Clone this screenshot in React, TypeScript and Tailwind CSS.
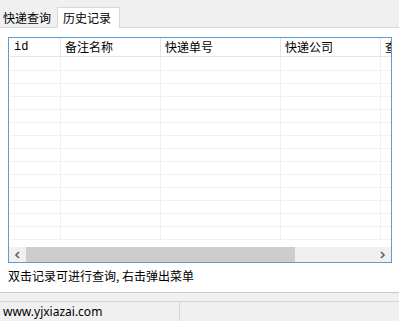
const cols = [
  { label: 'id', w: 'w-[51px]', mono: true },
  { label: '备注名称', w: 'w-[100px]' },
  { label: '快递单号', w: 'w-[120px]' },
  { label: '快递公司', w: 'w-[100px]' },
  { label: '查询时间', w: 'w-[100px]' },
];

const rows = Array.from({ length: 14 });

export default function App() {
  return (
    <div className="w-[399px] h-[321px] bg-white flex flex-col overflow-hidden text-[12px] text-black font-['Noto_Sans_CJK_SC',sans-serif]">
      {/* Tabs */}
      <div className="h-[28px] bg-[#f0f0f0] border-b border-[#d9d9d9] flex items-end shrink-0">
        <div className="h-[19px] w-[57px] pl-[3px] flex items-center leading-none">快递查询</div>
        <div className="h-[21px] w-[63px] -mb-px bg-white border border-b-0 border-[#d9d9d9] flex items-center pl-[5px] leading-none">
          历史记录
        </div>
      </div>

      {/* Body */}
      <div className="flex-1 flex flex-col pl-[8px] pt-[9px]">
        <div className="w-[384px] h-[226px] border border-[#5a9bd8] flex flex-col overflow-hidden">
          <div className="flex-1 overflow-hidden pl-px">
            <div className="flex h-[19px] border-b border-[#e5e5e5] w-[500px]">
              {cols.map((c) => (
                <div
                  key={c.label}
                  className={`${c.w} shrink-0 border-r border-[#e5e5e5] flex items-center pl-[4px] leading-none ${c.mono ? "font-['Liberation_Mono',monospace] text-[12px]" : ''}`}
                >
                  {c.label}
                </div>
              ))}
            </div>
            {rows.map((_, i) => (
              <div key={i} className={`flex w-[500px] border-b border-[#f0f0f0] ${i === 0 ? 'h-[14px]' : 'h-[13px]'}`}>
                {cols.map((c) => (
                  <div key={c.label} className={`${c.w} shrink-0 border-r border-[#f0f0f0]`} />
                ))}
              </div>
            ))}
          </div>
          {/* Horizontal scrollbar */}
          <div className="h-[15px] bg-[#f0f0f0] flex items-center shrink-0">
            <div className="w-[17px] h-full flex items-center justify-center">
              <svg width="7" height="8" viewBox="0 0 7 8">
                <path d="M5 1L2 4L5 7" stroke="#606060" strokeWidth="1.6" fill="none" />
              </svg>
            </div>
            <div className="w-[269px] h-full bg-[#cdcdcd]" />
            <div className="flex-1" />
            <div className="w-[17px] h-full flex items-center justify-center">
              <svg width="7" height="8" viewBox="0 0 7 8">
                <path d="M2 1L5 4L2 7" stroke="#606060" strokeWidth="1.6" fill="none" />
              </svg>
            </div>
          </div>
        </div>
        <div className="mt-[5px] leading-[16px]">双击记录可进行查询, 右击弹出菜单</div>
      </div>

      {/* Footer */}
      <div className="h-[9px] bg-[#f0f0f0] border-t border-[#c8c8c8] shrink-0" />
      <div className="h-[20px] bg-[#f0f0f0] border-t border-[#d7d7d7] flex shrink-0">
        <div className="w-[180px] border-r border-[#d7d7d7] pl-[3px] flex items-center font-['Noto_Sans',sans-serif] text-[12px] leading-none">
          www.yjxiazai.com
        </div>
      </div>
    </div>
  );
}
